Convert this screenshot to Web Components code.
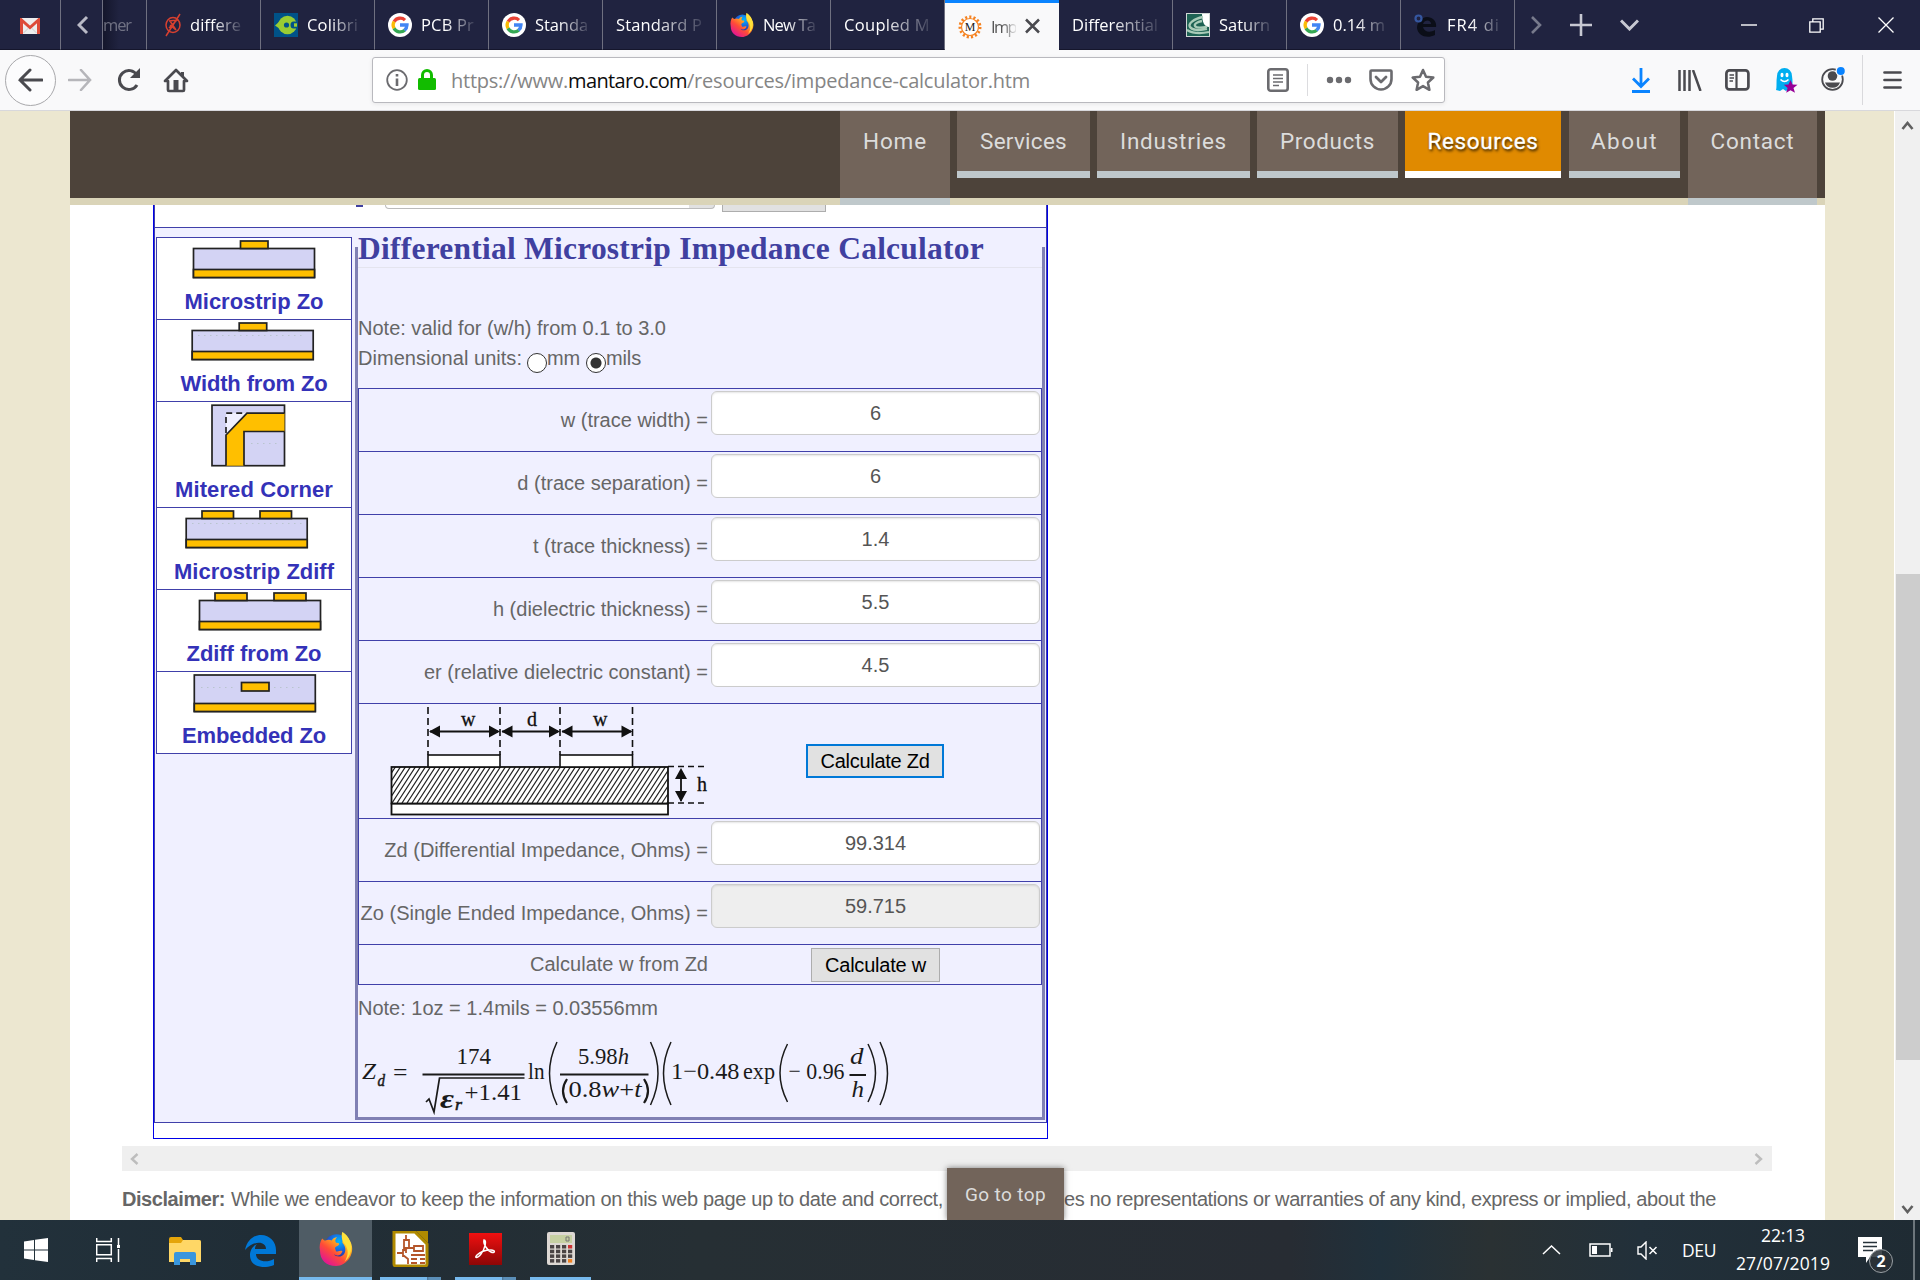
<!DOCTYPE html>
<html lang="en">
<head>
<meta charset="utf-8">
<title>Impedance Calculator</title>
<style>
html,body{margin:0;padding:0}
body{width:1920px;height:1280px;overflow:hidden;display:flex;flex-direction:column;font-family:"Liberation Sans",Arial,sans-serif;background:#fff}
</style>
</head>
<body>
<tab-strip></tab-strip>
<nav-toolbar></nav-toolbar>
<page-view></page-view>
<task-bar></task-bar>
<script>
const define = (name, render) => customElements.define(name, class extends HTMLElement {
  connectedCallback() {
    if (this.shadowRoot) return;
    this.attachShadow({ mode: 'open' }).innerHTML = render(this);
    if (name === 'fit-text') this.fit();
  }
  /* spreads the letters so that the line takes the width given in "w" */
  fit() {
    const span = this.shadowRoot.querySelector('span');
    const w = +this.getAttribute('w');
    const n = this.textContent.trim().length;
    if (w && n) span.style.letterSpacing = ((w - span.getBoundingClientRect().width) / n) + 'px';
  }
});
const svg = (w, h, body, extra = '') => `<svg width="${w}" height="${h}" viewBox="0 0 ${w} ${h}" fill="none" ${extra}>${body}</svg>`;
const spacer = w => `<i style="width:${w}px;flex:none"></i>`;

const firefox = (s, id) => `<svg width="${s}" height="${s}" viewBox="0 0 32 32" fill="none">
<defs><linearGradient id="${id}a" x1="27" y1="3" x2="7" y2="29" gradientUnits="userSpaceOnUse"><stop offset="0" stop-color="#fff44f"/><stop offset=".35" stop-color="#ffa51f"/><stop offset=".65" stop-color="#ff4b38"/><stop offset="1" stop-color="#e4188f"/></linearGradient>
<radialGradient id="${id}b" cx=".6" cy=".3" r=".7"><stop offset="0" stop-color="#00b8ff"/><stop offset=".6" stop-color="#1b5bd8"/><stop offset="1" stop-color="#30278f"/></radialGradient></defs>
<circle cx="16.500" cy="13.500" r="11.500" fill="url(#${id}b)"/>
<path d="M3 6c1 1 2 2 3 2 2-1 4-1 6 0 1-2 3-3 5-3-2 2-2 3-1 5 1 0 3 0 3 1 0 2-3 2-4 4l1 3c2 1 4-1 6 0-1 4-5 5-8 3 2 3 8 3 10-1 2-4 0-8-2-10 0-4 1-8 0-10 3 2 6 5 7 8 3 5 3 11 0 16-3 5-8 8-13 8C7 32 1 26 1 18 0 13 1 9 3 6z" fill="url(#${id}a)"/>
<path d="M22 0c4 3 7 7 8 12 1 6-1 12-6 16 4-6 4-12 0-17-3-4-3-8-2-11z" fill="#ffe13a"/></svg>`;
const google = svg(24, 24, `<circle cx="12" cy="12" r="12" fill="#fff"/><g stroke-width="3.300"><path d="M6.100 8.700A7 7 0 0 1 17 7.100" stroke="#ea4335"/><path d="M6.100 15.500A7 7 0 0 1 6.100 8.500" stroke="#fbbc05"/><path d="M16.700 17.200A7 7 0 0 1 6 15.400" stroke="#34a853"/><path d="M12 12h7A7 7 0 0 1 16.500 17.300" stroke="#4285f4"/></g>`);
const favicons = {
  google,
  diff: svg(24, 24, `<g stroke="#d8402f" stroke-width="1.500"><ellipse cx="12" cy="12" rx="7" ry="7.500"/><path d="M19 1 5 23M8 8l9-1M9 12l6 5M9 8l6 9M8 15l8-8"/></g>`, 'style="margin-right:5px;margin-left:1px"'),
  colibri: svg(24, 24, `<rect width="24" height="24" fill="#005288"/><circle cx="13.500" cy="12" r="9.300" fill="#9c3"/><path d="M1 12.500 6 8v8z" fill="#9c3"/><circle cx="12.500" cy="12" r="2.600" fill="#005288"/><path d="M24 8.500h-4.500a3 3.500 0 0 0 0 7H24z" fill="#005288"/><path d="M20 10.300h3v3.400h-3z" fill="#9c3"/>`),
  firefox: firefox(24, 'tf'),
  mantaro: svg(24, 24, `<circle cx="12" cy="12" r="10" stroke="#f58220" stroke-width="3" stroke-dasharray="2.100 2.090"/><circle cx="12" cy="12" r="8.500" stroke="#f58220" stroke-width="1.200" fill="#fff"/><text x="12" y="16.300" text-anchor="middle" font-family="Liberation Serif,serif" font-size="12" fill="#222">M</text>`),
  saturn: svg(24, 24, `<rect x=".5" y=".5" width="23" height="23" fill="#1d6253" stroke="#cfd6d4"/><path d="M16 1h7v13c-4 0-7-4-7-13z" fill="#fff"/><path d="M17 4C7 6 2 11 4 14s9 4 17 2M16 8c-5 1-8 3-7 5s6 2 12 1M1 17c5 3 13 4 22 2" stroke="#a9cbb8" stroke-width="2.300"/>`),
  e: svg(24, 24, `<path d="M22 14H9c1 5 7 6 12 3v5C13 26 4 23 3 15 3 9 8 4 13 4c6 0 10 5 9 10zM9 11h8c0-4-6-5-8 0z" fill="#0b0e18"/><circle cx="4.500" cy="5.500" r="3" stroke="#3557a0" stroke-width="2.200"/>`)
};

define('browser-tab', el => `<style>
:host{display:flex;box-sizing:border-box;width:114px;height:50px;flex:none;align-items:center;padding-left:13px;border-right:1px solid #6f7080;border-bottom:1px solid #15162c;color:#fff;font:16.5px/49px "Open Sans","Noto Sans",sans-serif;overflow:hidden}
:host([active]){background:#f9f9fa;color:#555;border:0;border-top:3px solid #0a84ff;line-height:44px}
svg{flex:none;margin-right:9px}
.t{flex:none;-webkit-mask-image:linear-gradient(90deg,#000 45%,rgba(0,0,0,.12) 100%);mask-image:linear-gradient(90deg,#000 45%,rgba(0,0,0,.12) 100%)}
</style>${favicons[el.getAttribute('icon')] || ''}<span class="t"><slot></slot></span>${el.hasAttribute('active') ? svg(15, 16, '<path d="m1 1.500 13 13m0-13-13 13" stroke="#4a4a4f" stroke-width="2.500"/>', 'style="margin:0 0 2px 9px"') : ''}`);

const tabs = [['diff', 'differe', 51], ['colibri', 'Colibri', 51], ['google', 'PCB Pr', 53], ['google', 'Standa', 53], ['', 'Standard P', 86], ['firefox', 'New Ta', 52], ['', 'Coupled M', 86], ['mantaro', 'Imp', 25, 'active'], ['', 'Differential', 86], ['saturn', 'Saturn', 51], ['google', '0.14 m', 52], ['e', 'FR4 di', 53]];
define('tab-strip', () => `<style>
:host{display:flex;height:50px;background:#202340;flex:none;align-items:center;color:#fff}
i,svg{flex:none}
.cell{box-sizing:border-box;height:50px;display:flex;align-items:center;border-right:1px solid #6f7080;border-bottom:1px solid #15162c}
.old{color:#9a9ba8;font:16.5px/49px "Open Sans","Noto Sans",sans-serif;background:linear-gradient(90deg,#14162b,#202340 16px)}
.old span{opacity:.65}
</style>
<div class="cell" style="width:61px;padding-left:20px">${svg(20, 16, '<rect width="20" height="16" rx="1.500" fill="#eee"/><path d="M1.500 16V2L10 9.500 18.500 2v14" stroke="#dd4b39" stroke-width="3"/><path d="m3.500 15 5-5m8 5-5-5" stroke="#ccc"/>', 'style="margin-top:3px"')}</div>
<div class="cell" style="width:42px;padding-left:16px">${svg(12, 20, '<path d="m10 2-8 8 8 8" stroke="#b9bac6" stroke-width="3"/>')}</div>
<div class="cell old" style="width:44px"><span><fit-text w="28">mer</fit-text></span></div>
${tabs.map(t => `<browser-tab icon="${t[0]}" ${t[3] || ''}><fit-text w="${t[2]}">${t[1]}</fit-text></browser-tab>`).join('')}
${spacer(15)}${svg(13, 20, '<path d="m2 2 8 8-8 8" stroke="#777a8c" stroke-width="2.600"/>')}
${spacer(27)}${svg(22, 22, '<path d="M11 0v22M0 11h22" stroke="#c7c8d2" stroke-width="2.600"/>')}
${spacer(28)}${svg(19, 12, '<path d="m1 1.500 8.500 8.500L18 1.500" stroke="#c7c8d2" stroke-width="3"/>')}
${spacer(102)}${svg(16, 2, '<path d="M0 1h16" stroke="#fff" stroke-width="1.400"/>')}
${spacer(52)}${svg(15, 15, '<path d="M.8 3.800h10.400v10.400H.8zM3.800 3.500V.8h10.400v10.400h-2.700" stroke="#fff" stroke-width="1.300"/>')}
${spacer(54)}${svg(16, 16, '<path d="m.5.5 15 15m0-15-15 15" stroke="#fff" stroke-width="1.300"/>')}`);

define('nav-toolbar', () => `<style>
:host{display:flex;box-sizing:border-box;height:61px;background:#f9f9fa;border-bottom:1px solid #d8d8dc;align-items:center;flex:none}
i,svg{flex:none}
.back{width:49px;height:49px;border:1px solid #a8a8ab;border-radius:50%;display:flex;align-items:center;justify-content:center;background:#fcfcfd;margin-left:5px}
.back svg{margin-right:2px}
.url{box-sizing:border-box;width:1073px;height:46px;border:1px solid #b9b9be;border-radius:3px;background:#fff;display:flex;align-items:center;font:20px/45px "Open Sans","Noto Sans",sans-serif;color:#858585;box-shadow:0 1px 4px rgba(0,0,0,.08);flex:none}
b{font-weight:400;color:#0c0c0d}
</style>
<div class="back">${svg(26, 24, '<path d="M13 2 3 12l10 10M3 12h22" stroke="#4a4a4f" stroke-width="3" stroke-linecap="round"/>')}</div>
${spacer(12)}${svg(24, 22, '<path d="m13 1 9 10-9 10M1 11h21" stroke="#b6b6ba" stroke-width="2.600" stroke-linecap="round"/>')}
${spacer(25)}${svg(25, 24, '<path d="M20 17a9.500 9.500 0 1 1 0-10" stroke="#4a4a4f" stroke-width="3"/><path d="M23 0v10H13z" fill="#4a4a4f"/>')}
${spacer(21)}${svg(26, 25, '<path d="M13 2 2 13h3v9c0 1 .5 1 1 1h14c.5 0 1 0 1-1v-9h3z" stroke="#4a4a4f" stroke-width="2.700" stroke-linejoin="round"/><path d="M10.500 12h5v10h-5z" fill="#4a4a4f"/><path d="M18 4h3v5l-3-3z" fill="#4a4a4f"/>')}
${spacer(183)}
<div class="url">${spacer(13)}${svg(22, 22, '<circle cx="11" cy="11" r="9.800" stroke="#6b6b6f" stroke-width="1.800"/><path d="M11 9.500V17M11 5v2.500" stroke="#6b6b6f" stroke-width="2.600"/>')}${spacer(10)}
${svg(18, 22, '<path d="M4.500 11V6a4.500 4.500 0 0 1 9 0v5" stroke="#12bc00" stroke-width="3"/><rect y="9" width="18" height="12" rx="1.500" fill="#12bc00"/>')}${spacer(15)}
<fit-text w="117">https://www.</fit-text><b><fit-text w="119">mantaro.com</fit-text></b><fit-text w="343">/resources/impedance-calculator.htm</fit-text>
${spacer(237)}${svg(22, 24, '<rect x="1.300" y="1.300" width="19.400" height="21.400" rx="2.500" stroke="#6b6b6f" stroke-width="2.600"/><path d="M6 7h10M6 10.500h10M6 14h10M6 17.500h6" stroke="#6b6b6f" stroke-width="1.700"/>')}
${spacer(18)}${svg(1, 32, '<path d="M.5 0v32" stroke="#dcdcdf"/>')}${spacer(18)}${svg(26, 8, '<g fill="#6b6b6f"><circle cx="4" cy="4" r="3.200"/><circle cx="13" cy="4" r="3.200"/><circle cx="22" cy="4" r="3.200"/></g>')}
${spacer(17)}${svg(24, 22, '<path d="M2.500 1.500h19c.6 0 1 .4 1 1V10a10.500 10.500 0 0 1-21 0V2.500c0-.6.400-1 1-1z" stroke="#6b6b6f" stroke-width="2.600"/><path d="m7 8 5 5 5-5" stroke="#6b6b6f" stroke-width="2.800" stroke-linecap="round" stroke-linejoin="round"/>')}
${spacer(18)}${svg(24, 24, '<path d="m12 2 3 6.700 7.300.8-5.400 5 1.500 7.300-6.400-3.700-6.400 3.700 1.500-7.300-5.400-5L9 8.700z" stroke="#6b6b6f" stroke-width="2.500" stroke-linejoin="round"/>')}</div>
${spacer(186)}${svg(20, 25, '<path d="M10 0v18M2 10.500l8 8 8-8M1 23.500h18" stroke="#0a84ff" stroke-width="2.800"/>')}
${spacer(27)}${svg(24, 21, '<path d="M1.500 0v21M6.500 0v21M11.500 0v21M15 0l7.500 21" stroke="#4a4a4f" stroke-width="2.500"/>')}
${spacer(23)}${svg(25, 22, '<rect x="1.400" y="1.400" width="22" height="19" rx="3" stroke="#4a4a4f" stroke-width="2.700"/><path d="M11.500 1v20" stroke="#4a4a4f" stroke-width="2.200"/><path d="M4.500 6h4.500M4.500 9h4.500M4.500 12h3.500" stroke="#4a4a4f" stroke-width="1.600"/>')}
${spacer(25)}${svg(24, 25, '<path d="M1 22c1-3 0-9 1-14a7.500 8 0 0 1 15 0c1 5 0 11 1 14l-4-1-3 2-3-2-3 2z" fill="#00aef0"/><g fill="#fff"><ellipse cx="7" cy="7" rx="1.500" ry="2.200"/><ellipse cx="12" cy="7" rx="1.500" ry="2.200"/></g><path d="M5.500 11.500q4 4 8 0" stroke="#fff" stroke-width="1.600"/><path d="m15.500 12 2 4.500 5 .3-4 3.200 1.500 4.800-4.500-2.600-4.300 2.600 1.400-4.800-3.800-3.200 4.700-.3z" fill="#970097"/>')}
${spacer(22)}${svg(25, 25, '<circle cx="11.500" cy="13.500" r="10.300" stroke="#4a4a4f" stroke-width="1.800"/><circle cx="11.500" cy="10" r="4.800" fill="#4a4a4f"/><path d="M4 16.500h15a8 8 0 0 1-15 0z" fill="#4a4a4f"/><circle cx="19.500" cy="5" r="5" fill="#f9f9fa"/><circle cx="19.800" cy="5" r="4" fill="#0a84ff"/>', 'style="margin-bottom:3px"')}
${spacer(16)}${svg(1, 50, '<path d="M.5 0v50" stroke="#d9d9dc"/>')}${spacer(20)}${svg(20, 20, '<path d="M1.500 2.500h16M1.500 10h16M1.500 17.500h16" stroke="#4a4a4f" stroke-width="2.700" stroke-linecap="round"/>')}`);

define('nav-item', el => `<style>
:host{display:flex;flex-direction:column;box-sizing:border-box;height:67px;background:#72645a;border-bottom:7px solid #bfc8cb;margin-right:7px;flex:none;align-items:center;font:22.5px/61px Roboto,sans-serif;color:#dcdcdc}
:host([tall]){height:94px}
:host([on]){background:#e08a00;border-bottom-color:#fff;color:#fff;text-shadow:1px 2px 3px rgba(0,0,0,.85);-webkit-text-stroke:.3px #fff}
</style><slot></slot>`);
define('site-header', () => `<style>
:host{display:block;height:94px;background:linear-gradient(#4d433a 87px,#dad4b8 87px);flex:none}
nav{display:flex;padding-left:770px}
</style><nav>${[['Home', 110, 64, 'tall'], ['Services', 133, 87], ['Industries', 153, 107], ['Products', 141, 95], ['Resources', 156, 111, 'on'], ['About', 111, 67], ['Contact', 129, 84, 'tall']].map(n => `<nav-item style="width:${n[1]}px${n[0] == 'Resources' || n[0] == 'About' ? ';margin-right:8px' : ''}" ${n[3] || ''}><fit-text w="${n[2]}">${n[0]}</fit-text></nav-item>`).join('')}</nav>`);

/* cross-section thumbnails, 194 px wide; x values count from the card's inner left edge */
const slab = (x, y, h, pads, py) => `<g stroke="#222" stroke-width="1.700"><rect x="${x}" y="${y}" width="121" height="${h}" fill="#d3d3f4"/><rect x="${x}" y="${y + h - 8}" width="121" height="8" fill="#ffbf00"/>${pads.map(p => `<rect x="${p[0]}" y="${py}" width="${p[1]}" height="${7.500 + (py > 8 ? 1 : 0)}" fill="#ffbf00"/>`).join('')}</g>`;
const dots = (x, y, n) => `<path d="M${x} ${y}h${n * 6}" stroke="#b9c4cf" stroke-dasharray="1.500 4.500"/>`;
const cards = [
  [81, 'Microstrip Zo', 139, slab(36.5, 10.500, 29, [[83.5, 27.500]], 3)],
  [81, 'Width from Zo', 147, slab(35.2, 10.500, 29, [[82.200, 27.500]], 3) + dots(41, 15.500, 18)],
  [105, 'Mitered Corner', 158, `<rect x="55" y="3.200" width="72.500" height="60.500" fill="#d3d3f4" stroke="#222" stroke-width="1.700"/><path d="M69 33 91 11H69z" fill="#f0f0ff"/><path d="M69 63.700V33L90 11.200h37.500V29.500H87v34.200z" fill="#ffbf00"/><path d="M69 63.700V33L90 11.200h37.500M127.500 29.500H87v34.200" stroke="#222" stroke-width="1.700"/><path d="M69 31V11.200h20" stroke="#222" stroke-width="1.700" stroke-dasharray="6 4"/>` + dots(94, 41.500, 5)],
  [81, 'Microstrip Zdiff', 160, slab(29.200, 10.500, 29, [[45, 31.500], [103, 31.500]], 3) + dots(35, 15.500, 19)],
  [81, 'Zdiff from Zo', 135, slab(42.500, 10.500, 29, [[58, 32], [117, 32]], 3)],
  [81, 'Embedded Zo', 144, slab(37.300, 3, 36.500, [[84.500, 27.500]], 10.500) + dots(44, 15.500, 6) + dots(117, 15.500, 5)]
];
define('side-card', el => {
  const c = cards[+el.getAttribute('n')];
  return `<style>
:host{display:flex;flex-direction:column;align-items:center;box-sizing:border-box;background:#fff;border-bottom:1px solid #4040aa;height:${c[0] + 1}px;color:#3432b8;font:bold 22px/25px "Liberation Sans",Arial,sans-serif}
svg{display:block;flex:none;height:${c[0] - 30}px}
</style>${svg(194, c[0] - 30, c[3])}<fit-text w="${c[2]}">${c[1]}</fit-text>`;
});

define('calc-row', el => {
  const v = el.getAttribute('value');
  return `<style>
:host{display:flex;box-sizing:border-box;height:63px;border-bottom:1px solid #4040aa;color:#666;font-size:20px;line-height:62px}
.l{width:349px;text-align:right;flex:none;white-space:nowrap;display:flex;justify-content:flex-end}
.v{box-sizing:border-box;width:329px;height:44px;margin:2px 0 0 3px;border:1px solid #ccc;border-radius:6px;background:${el.hasAttribute('off') ? '#eee' : '#fff'};text-align:center;line-height:42px;color:#555;box-shadow:inset 0 1px 2px rgba(0,0,0,.1)}
</style><div class="l"><fit-text w="${el.getAttribute('w')}"><slot></slot></fit-text></div><div class="v">${v}</div>`;
});
define('push-button', () => `<style>
:host{display:block;box-sizing:border-box;height:34px;background:#e1e1e1;border:1px solid #adadad;color:#000;font-size:20px;line-height:32px;text-align:center}
:host([focus]){border:2px solid #0078d7;line-height:30px}
</style><slot></slot>`);

const ah = (x, y, d) => d == 'l' ? `M${x} ${y}l11-6v12z` : d == 'r' ? `M${x} ${y}l-11-6v12z` : d == 'u' ? `M${x} ${y}l-6 11h12z` : `M${x} ${y}l-6-11h12z`;
define('stackup-figure', () => {
  let hatch = '';
  for (let x = 391 - 24; x < 668; x += 5) hatch += `M${x} 803l24-37`;
  return `<style>:host{display:block;width:352px;height:114px;flex:none}svg{display:block}text{font-family:"Liberation Serif",serif;font-size:20px;fill:#111;stroke:#111;stroke-width:.3px}</style>
<svg width="352" height="114" viewBox="359 704 352 114" fill="none">
<defs><clipPath id="c"><rect x="391" y="767" width="277" height="36"/></clipPath></defs>
<rect x="391.500" y="803.500" width="276.500" height="11" fill="#fff" stroke="#111" stroke-width="1.800"/>
<g clip-path="url(#c)"><rect x="391" y="766" width="277" height="38" fill="#fff"/><path d="${hatch}" stroke="#222" stroke-width="1.200"/></g>
<rect x="391.500" y="767" width="276.500" height="36.500" stroke="#111" stroke-width="1.800"/>
<g fill="#fff" stroke="#111" stroke-width="1.600"><rect x="428" y="755" width="72" height="12"/><rect x="560" y="755" width="72.500" height="12"/></g>
<path d="M428 707v48M500 707v48M560 707v48M632.500 707v48" stroke="#111" stroke-width="1.600" stroke-dasharray="7 4"/>
<path d="M430 731.500h68M502 731.500h56M562 731.500h69M681 770v31" stroke="#111" stroke-width="1.800"/>
<path d="M668 766.500h39M668 803h39" stroke="#111" stroke-width="1.600" stroke-dasharray="6 4"/>
<path fill="#111" d="${ah(429, 731.500, 'l')}${ah(500, 731.500, 'r')}${ah(501.500, 731.500, 'l')}${ah(560, 731.500, 'r')}${ah(561.500, 731.500, 'l')}${ah(632.500, 731.500, 'r')}${ah(681, 768, 'u')}${ah(681, 802, 'd')}"/>
<text x="461" y="726">w</text><text x="527" y="726">d</text><text x="593" y="726">w</text><text x="697" y="791">h</text>
</svg>`;
});

define('zd-formula', () => {
  const t = (x, y, w, s, e = '') => `<text x="${x}" y="${y}" textLength="${w}" lengthAdjust="spacingAndGlyphs" ${e}>${s}</text>`;
  const I = 'font-style="italic"';
  const lp = (x, y1, y2) => `M${x + 8} ${y1}Q${x - 7} ${(y1 + y2) / 2} ${x + 8} ${y2}`;
  const rp = (x, y1, y2) => `M${x} ${y1}Q${x + 15} ${(y1 + y2) / 2} ${x} ${y2}`;
  return `<style>:host{display:block;height:84px}svg{display:block}text{font:24px "Liberation Serif","Times New Roman",serif;fill:#1a1a1a}text[font-style]{font-style:italic}.s{font-size:17px}.b{font-weight:bold;font-size:28px}</style>
<svg width="684" height="84" viewBox="358 1033 684 84" fill="none">
${t(362, 1079, 14, 'Z', I)}${t(377.500, 1086, 7.500, 'd', I + ' class="s" stroke="#1a1a1a" stroke-width=".5"')}${t(393, 1080, 14.500, '=')}
${t(456.500, 1064, 34.500, '174')}${t(440, 1108, 14, 'ε', I + ' class="b"')}${t(455, 1110, 7, 'r', I + ' class="s" stroke="#1a1a1a" stroke-width=".6"')}${t(464.500, 1100, 57.500, '+1.41')}
${t(528, 1079, 16.500, 'ln')}${t(578, 1064, 51, '5.98<tspan font-style="italic">h</tspan>')}
${t(568.500, 1097, 73, '0.8<tspan font-style="italic">w</tspan>+<tspan font-style="italic">t</tspan>')}
${t(671, 1079, 68.500, '1−0.48')}${t(743, 1079, 32, 'exp')}${t(788.500, 1079, 56, '− 0.96')}
${t(850, 1064, 13.500, 'd', I)}${t(851.500, 1097, 12.500, 'h', I)}
<g stroke="#1a1a1a" stroke-width="1.500"><path d="${lp(549, 1042, 1105)}${rp(650.500, 1042, 1105)}${lp(663, 1042, 1105)}${lp(779.500, 1044, 1102)}${rp(868, 1044, 1102)}${rp(880, 1042, 1105)}"/>
<path d="M422.500 1074.500h102M560 1074.500h88.500M849.500 1075h16.500" stroke-width="1.800"/>
<path d="M426 1102l3-3 5 13 5.500-34h85" stroke-width="1.700"/>
<path d="M567 1079q-8 12 0 24M644 1079q8 12 0 24" stroke-width="2.200"/></g></svg>`;
});

define('calc-panel', () => `<style>
:host{display:block;box-sizing:border-box;width:690px;height:873px;margin:19px 0 0 3px;border:3px solid #8080b4;border-top:0;color:#666;font-size:20px;flex:none}
h2{margin:-18px 0 0;height:38px;font:bold 31.5px/39px "Liberation Serif","Times New Roman",serif;color:#4040a0;border-bottom:1px solid #e4e4ee}
.n{height:30px;line-height:30px;display:flex}
.r{box-sizing:border-box;width:20px;height:20px;border:1.500px solid #333;border-radius:50%;background:#fff;margin-top:10px;flex:none}
.on{background:radial-gradient(circle,#333 5px,#fff 6px)}
.t{box-sizing:border-box;border:1px solid #4040aa;border-bottom:0;width:684px;margin-top:15px}
.f{display:flex;box-sizing:border-box;height:115px;border-bottom:1px solid #4040aa}
.g{display:flex;box-sizing:border-box;height:40px;line-height:38px;border-bottom:1px solid #4040aa}
</style>
<h2><fit-text w="626">Differential Microstrip Impedance Calculator</fit-text></h2>
<div class="n" style="margin-top:45px"><fit-text w="308">Note: valid for (w/h) from 0.1 to 3.0</fit-text></div>
<div class="n"><fit-text w="164">Dimensional units:</fit-text>${spacer(5)}<b class="r"></b><fit-text w="33">mm</fit-text>${spacer(6)}<b class="r on"></b><fit-text w="35">mils</fit-text></div>
<div class="t">
<calc-row value="6" w="148">w (trace width) =</calc-row>
<calc-row value="6" w="191">d (trace separation) =</calc-row>
<calc-row value="1.4" w="175">t (trace thickness) =</calc-row>
<calc-row value="5.5" w="216">h (dielectric thickness) =</calc-row>
<calc-row value="4.5" w="285">er (relative dielectric constant) =</calc-row>
<div class="f"><stackup-figure></stackup-figure><push-button focus style="width:138px;margin:40px 0 0 95px"><fit-text w="109">Calculate Zd</fit-text></push-button></div>
<calc-row value="99.314" w="324">Zd (Differential Impedance, Ohms) =</calc-row>
<calc-row value="59.715" w="348" off>Zo (Single Ended Impedance, Ohms) =</calc-row>
<div class="g"><span style="width:177px;margin-left:171px"><fit-text w="178">Calculate w from Zd</fit-text></span><push-button style="width:129px;margin:3px 0 0 104px"><fit-text w="101">Calculate w</fit-text></push-button></div>
</div>
<div class="n" style="margin:8px 0 10px"><fit-text w="300">Note: 1oz = 1.4mils = 0.03556mm</fit-text></div>
<zd-formula></zd-formula>`);

define('page-view', () => `<style>
:host{display:flex;height:1109px;flex:none;overflow:hidden;position:relative;background:#ece7d0;color:#666}
main{width:1755px;margin-left:70px;background:#fff;display:flex;flex-direction:column;height:1109px;overflow:hidden;flex:none}
.outer{box-sizing:border-box;width:895px;height:934px;margin-left:83px;border:1px solid #0000e8;border-top:0;flex:none}
.top{box-sizing:border-box;height:22px;display:flex;align-items:flex-start;overflow:hidden;border:1px solid #4040aa;border-width:0 1px}
.p{width:7px;height:2px;background:#4040a0;margin-left:201px}
.sel{box-sizing:border-box;width:330px;height:4px;margin-left:22px;border:1px solid #bbb;border-top:0;border-radius:0 0 5px 5px;background:linear-gradient(90deg,#fff 303px,#e1e1e1 303px)}
.btn{box-sizing:border-box;width:104px;height:7px;margin-left:7px;border:1px solid #adadad;border-top:0;background:#e1e1e1}
.inner{display:flex;align-items:flex-start;box-sizing:border-box;height:896px;border:1px solid #4040aa;background:#f0f0ff;padding-left:1px}
.side{box-sizing:border-box;width:196px;margin-top:9px;border:1px solid #4040aa;border-bottom:0;flex:none}
.hs{display:flex;align-items:center;justify-content:space-between;box-sizing:border-box;width:1650px;height:25px;margin:7px 0 0 52px;padding:0 8px 0 7px;background:#efefef;flex:none}
p{margin:0 0 0 52px;font-size:20px;line-height:57px;white-space:nowrap;display:flex}
.go{position:absolute;left:947px;top:1057px;width:117px;height:52px;background:#72645a;color:#dcdcdc;font:19px/53px Roboto,sans-serif;text-align:center;box-shadow:0 0 6px rgba(0,0,0,.5)}
.vs{box-sizing:border-box;width:26px;height:1109px;margin-left:69px;background:#f0f0f0;border-left:1px solid #fff;display:flex;flex-direction:column;align-items:center;padding:10px 0 6px;flex:none}
.th{width:24px;height:486px;background:#cdcdcd;margin-top:443px;flex:none}
</style>
<main><site-header></site-header>
<div class="outer"><div class="top"><div class="p"></div><div class="sel"></div><div class="btn"></div></div>
<div class="inner"><div class="side">${cards.map((c, i) => `<side-card n="${i}"></side-card>`).join('')}</div><calc-panel></calc-panel></div></div>
<div class="hs">${svg(10, 12, '<path d="M8.500 1 3 6l5.500 5" stroke="#bdbdbd" stroke-width="2.400"/>')}${svg(10, 12, '<path d="M1.500 1 7 6l-5.500 5" stroke="#bdbdbd" stroke-width="2.400"/>')}</div>
<p><b style="margin-right:6px"><fit-text w="103">Disclaimer:</fit-text></b><fit-text w="712">While we endeavor to keep the information on this web page up to date and correct,</fit-text>${spacer(121)}<fit-text w="652">es no representations or warranties of any kind, express or implied, about the</fit-text></p>
</main>
<div class="vs">${svg(13, 10, '<path d="m1.500 8 5-6 5 6" stroke="#606060" stroke-width="2.600"/>')}<div class="th"></div>${svg(13, 10, '<path d="m1.500 2 5 6 5-6" stroke="#606060" stroke-width="2.600"/>', 'style="margin-top:auto"')}</div>
<div class="go"><fit-text w="81">Go to top</fit-text></div>`);

define('task-item', el => `<style>
:host{display:flex;flex-direction:column;align-items:center;justify-content:space-between;height:60px;flex:none;box-sizing:border-box}
:host([on]){background:#4f5c65}
.i{height:57px;display:flex;align-items:center}
.bar{width:100%;height:3px;background:${el.getAttribute('bar') || 'none'}}
</style><div class="i"><slot></slot></div><div class="bar"></div>`);
let keys = '';
for (let r = 0; r < 4; r++) for (let c = 0; c < 4; c++) keys += `<rect x="${3 + c * 6}" y="${13 + r * 4.700}" width="4.200" height="3.500" fill="${c == 3 && r == 0 ? '#c33' : c == 3 && r == 3 ? '#f08020' : '#4a4444'}"/>`;
define('task-bar', () => `<style>
:host{display:flex;height:60px;flex:none;align-items:center;background:linear-gradient(90deg,#22313b 0,#202d36 260px,#262f34 700px,#272c33 1290px,#20303b 1380px,#2a3133 1490px,#22303a 1640px,#1f2b33 1920px);color:#fff;font:17.500px/28px "Open Sans","Noto Sans",sans-serif}
i,svg{flex:none}
.clock{width:94px;display:flex;flex-direction:column;align-items:center;line-height:28px;height:58px}
.note{position:relative;width:36px;height:40px;flex:none}
.badge{position:absolute;left:11px;top:19px;width:22px;height:22px;border:1px solid #9aa0a4;border-radius:50%;background:#2b3238e0;text-align:center;font:bold 16px/22px "Open Sans",sans-serif}
</style>
${spacer(24)}<task-item>${svg(24, 24, '<path d="M0 3.500 10 2v9.500H0zM11 1.800 24 0v11.500H11zM0 12.500h10V22L0 20.500zM11 12.500h13V24l-13-1.800z" fill="#fff"/>', 'style="margin-top:3px"')}</task-item>
${spacer(48)}<task-item>${svg(25, 24, '<path d="M.7 0v3.500h14.600V0M.7 6.700h14.600v10H.7zM.7 24v-3.500h14.600V24M22.500 0v7M22.500 11v13" stroke="#fff" stroke-width="1.500"/><path d="M21 7h3v3h-3z" fill="#fff"/>', 'style="margin-top:3px"')}</task-item>
${spacer(48)}<task-item>${svg(32, 28, '<path d="M0 2q0-2 2-2h10l2 3h16q2 0 2 2v20H0z" fill="#e5a50a"/><path d="M0 6h12l2-3h16q2 0 2 2v20H0z" fill="#ffd766"/><path d="M5 28V17q0-2 2-2h18q2 0 2 2v11h-6v-6H11v6z" fill="#3a96dd"/>', 'style="margin-top:4px"')}</task-item>
${spacer(44)}<task-item>${svg(31, 32, '<path d="M0 15C2 5 9 0 16 0c9 0 15 7 15 15v4H11c0 8 11 9 18 5v6c-9 4-24 3-24-10 0-5 3-9 7-11-2 2-2 4-2 5h11c0-8-12-9-21 1z" fill="#0078d7"/>', 'style="margin-top:4px"')}</task-item>
${spacer(23)}<task-item on bar="#76b9ed" style="width:73px">${firefox(34, 'bf')}</task-item>
${spacer(8)}<task-item bar="linear-gradient(90deg,#76b9ed 47px,#4c7190 47px,#5b8fb8 49px)" style="width:61px">${svg(37, 36, '<path d="M2 1h21l12 12v20q0 2-2 2H4q-2 0-2-2z" fill="#fff" stroke="#b08a00" stroke-width="3"/><path d="m24 0 12 12V0z" fill="#b08a00"/><g stroke="#b5562a" stroke-width="1.800"><path d="M14 4v5M12 9h5v8h-5zM14 17v5M5 22h6M11 18v8M11 20l6-4M11 24l5 4v5M17 17h5M22 15h9v5h-9zM19 24h14M19 28h6m3 0h5M19 32h6m3 0h5"/></g>')}</task-item>
${spacer(14)}<task-item bar="linear-gradient(90deg,#76b9ed 47px,#4c7190 47px,#5b8fb8 49px)" style="width:61px">${svg(33, 32, '<defs><linearGradient id="ad" x2="0" y2="1"><stop stop-color="#f01010"/><stop offset="1" stop-color="#8d0606"/></linearGradient></defs><rect width="33" height="32" fill="url(#ad)"/><path d="M15 7c3 0 1 9-3 14s-7 4-4 1 9-5 14-5 4 4 0 2-8-8-7-12z" stroke="#fff" stroke-width="1.500"/>')}</task-item>
${spacer(14)}<task-item bar="#76b9ed" style="width:61px">${svg(28, 33, `<rect width="28" height="33" rx="2" fill="#ddd8d3"/><rect x="3" y="3" width="22" height="8" fill="#c6d0a2"/><path d="M19 5h3v4h-3z" stroke="#777"/>${keys}`)}</task-item>
${spacer(951)}${svg(19, 10, '<path d="m1 9 8.500-8L18 9" stroke="#fff" stroke-width="1.500"/>')}
${spacer(28)}${svg(24, 14, '<path d="M1 1h20v12H1z" stroke="#fff" stroke-width="1.500"/><path d="M3 3h5v8H3zM22 5h1.500v4H22z" fill="#fff"/>')}
${spacer(24)}${svg(21, 19, '<path d="M1 6h3l5-5v17l-5-5H1z" stroke="#fff" stroke-width="1.400"/><path d="m12.500 6 7 7m0-7-7 7" stroke="#fff" stroke-width="1.500"/>')}
${spacer(24)}<fit-text w="34">DEU</fit-text>${spacer(20)}
<div class="clock"><fit-text w="44">22:13</fit-text><fit-text w="94">27/07/2019</fit-text></div>
${spacer(28)}<div class="note">${svg(24, 28, '<path d="M0 0h24v20H12l-4 6v-6H0z" fill="#fff"/><path d="M5 5.500h14M5 9.500h14M5 13.500h10" stroke="#26323a" stroke-width="1.300"/>', 'style="margin-top:7px"')}<div class="badge">2</div></div>
${spacer(19)}${svg(2, 60, '<path d="M1 0v60" stroke="#6d767c" stroke-width="2"/>')}`);

define('fit-text', () => `<style>:host{display:inline-block;white-space:pre;flex:none}span{display:inline-block}</style><span><slot></slot></span>`);
</script>
</body>
</html>
